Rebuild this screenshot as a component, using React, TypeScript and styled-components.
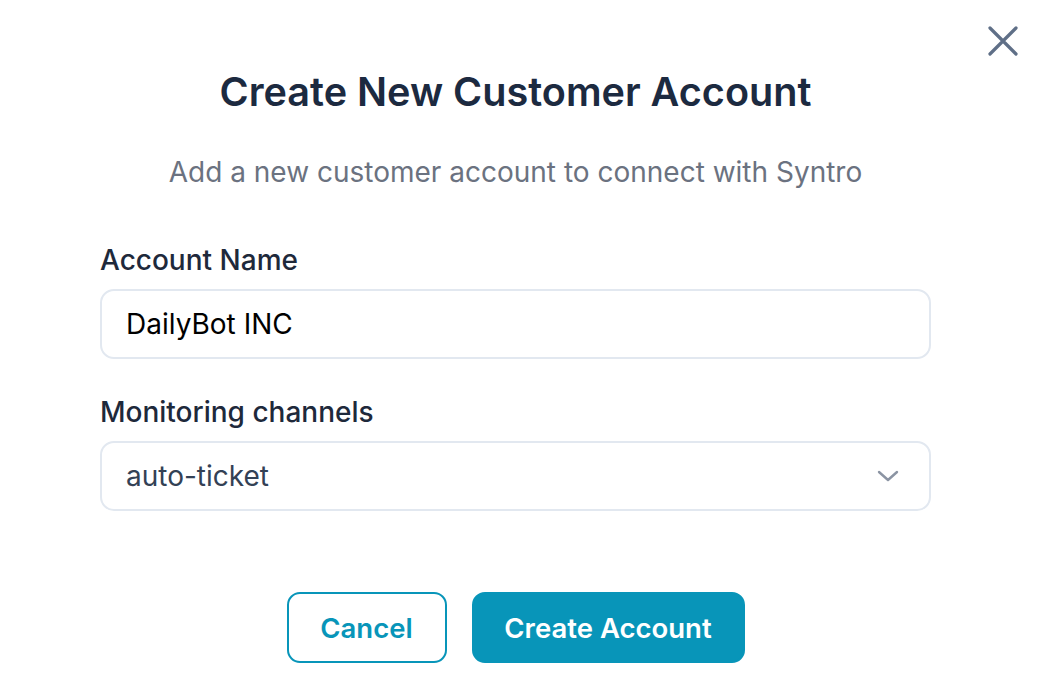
import styled, { createGlobalStyle } from "styled-components";

const GlobalStyle = createGlobalStyle`
  html, body {
    margin: 0;
    padding: 0;
    background: #ffffff;
  }
  body {
    font-family: Inter, "Noto Sans", sans-serif;
    -webkit-font-smoothing: antialiased;
  }
`;

const Modal = styled.div`
  position: relative;
  width: 1054px;
  height: 684px;
  box-sizing: border-box;
  padding: 70px 0 0 100px;
  background: #ffffff;
`;

const CloseButton = styled.button`
  position: absolute;
  top: 24px;
  right: 34px;
  width: 34px;
  height: 34px;
  padding: 0;
  border: none;
  background: transparent;
  display: flex;
  align-items: center;
  justify-content: center;
  cursor: pointer;
`;

const Content = styled.div`
  width: 831px;
  display: flex;
  flex-direction: column;
`;

const Title = styled.h1`
  margin: 0;
  text-align: center;
  font-size: 39.6px;
  line-height: 44px;
  font-weight: 600;
  color: #1c2a40;
`;

const Subtitle = styled.p`
  margin: 41px 0 0;
  text-align: center;
  font-size: 28px;
  line-height: 34px;
  font-weight: 400;
  color: #6b7280;
`;

const Field = styled.div<{ $top: number }>`
  display: flex;
  flex-direction: column;
  margin-top: ${(p) => p.$top}px;
`;

const Label = styled.label`
  font-size: 28px;
  line-height: 34px;
  font-weight: 500;
  color: #1e293b;
  margin-bottom: 12px;
`;

const Input = styled.div<{ $color: string }>`
  height: 70px;
  box-sizing: border-box;
  border: 2px solid #e2e8f0;
  border-radius: 14px;
  padding: 0 24px;
  display: flex;
  align-items: center;
  justify-content: space-between;
  font-size: 28px;
  color: ${(p) => p.$color};
`;

const Chevron = styled.svg`
  margin-right: 6px;
`;

const Actions = styled.div`
  display: flex;
  justify-content: center;
  gap: 25px;
  margin-top: 81px;
`;

const Button = styled.button<{ $primary?: boolean }>`
  height: 71px;
  box-sizing: border-box;
  padding: 0 30px;
  border-radius: 13px;
  font-family: Inter, "Noto Sans", sans-serif;
  font-size: 27.5px;
  font-weight: 600;
  cursor: pointer;
  border: 2px solid #0895b9;
  background: ${(p) => (p.$primary ? "#0895b9" : "#ffffff")};
  color: ${(p) => (p.$primary ? "#ffffff" : "#0895b9")};
  min-width: ${(p) => (p.$primary ? "273px" : "160px")};
`;

export default function App() {
  return (
    <>
      <GlobalStyle />
      <Modal>
        <CloseButton aria-label="Close">
          <svg width="34" height="34" viewBox="0 0 34 34" fill="none">
            <path
              d="M4 4 L30 30 M30 4 L4 30"
              stroke="#5f6f87"
              strokeWidth="3.2"
              strokeLinecap="round"
            />
          </svg>
        </CloseButton>
        <Content>
          <Title>Create New Customer Account</Title>
          <Subtitle>Add a new customer account to connect with Syntro</Subtitle>
          <Field $top={54}>
            <Label>Account Name</Label>
            <Input $color="#000000">DailyBot INC</Input>
          </Field>
          <Field $top={36}>
            <Label>Monitoring channels</Label>
            <Input $color="#334155">
              <span>auto-ticket</span>
              <Chevron width="22" height="12" viewBox="0 0 22 12" fill="none">
                <path
                  d="M2 2 L11 10 L20 2"
                  stroke="#8b94a3"
                  strokeWidth="2.4"
                  strokeLinecap="round"
                  strokeLinejoin="round"
                />
              </Chevron>
            </Input>
          </Field>
          <Actions>
            <Button>Cancel</Button>
            <Button $primary>Create Account</Button>
          </Actions>
        </Content>
      </Modal>
    </>
  );
}
